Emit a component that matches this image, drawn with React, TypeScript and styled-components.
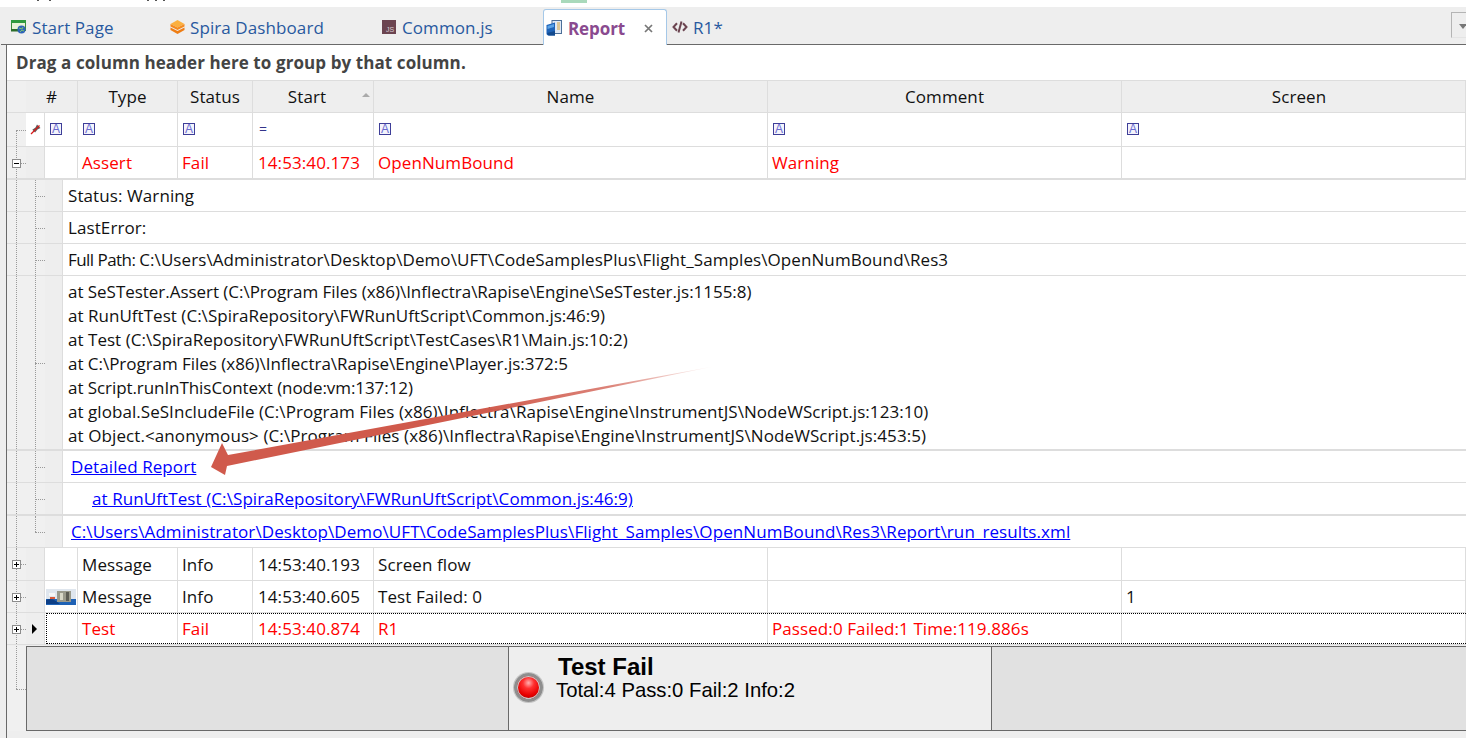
import React from "react";
import styled, { createGlobalStyle } from "styled-components";

const Global = createGlobalStyle`
  html, body { margin: 0; padding: 0; background: #eeeeee; overflow: hidden; }
  * { box-sizing: border-box; }
`;

const COLUMNS = "19px 19px 33px 100px 75px 121px 394px 354px 1fr";
const BODY_FONT = `"Open Sans", "Noto Sans", sans-serif`;

const Page = styled.div`
  position: relative;
  width: 1466px;
  height: 738px;
  display: flex;
  flex-direction: column;
  background: #eeeeee;
  overflow: hidden;
  font-family: ${BODY_FONT};
  font-size: 17px;
  letter-spacing: 0.09px;
  color: #111;
`;

const TopClip = styled.div`
  height: 7px;
  flex: none;
  background: #fff;
  display: flex;
  align-items: flex-start;
  padding-left: 36px;
`;

const Descender = styled.i<{ $gap: number; $w?: number }>`
  display: block;
  width: ${(p) => p.$w ?? 2}px;
  height: ${(p) => (p.$w ? 3 : 1)}px;
  margin-left: ${(p) => p.$gap}px;
  background: ${(p) => (p.$w ? "#a9d9bb" : "#555")};
`;

const TabStrip = styled.div`
  position: relative;
  height: 38px;
  flex: none;
  display: flex;
  align-items: flex-end;
  padding-left: 10px;
  margin-left: 1px;
  border-bottom: 1px solid #696969;
`;

const Tab = styled.div<{ $w: number }>`
  width: ${(p) => p.$w}px;
  height: 34px;
  flex: none;
  display: flex;
  align-items: center;
  gap: 5px;
  color: #28599f;
`;

const ActiveTab = styled.div`
  width: 124px;
  height: 36px;
  flex: none;
  margin-bottom: -1px;
  margin-right: 5px;
  display: flex;
  align-items: center;
  gap: 6px;
  padding: 1px 0 0 2px;
  background: #fff;
  border: 1px solid #a5c8e8;
  border-bottom: none;
  border-radius: 3px 3px 0 0;
  color: #8a4a8f;
  font-weight: 700;
  letter-spacing: -0.1px;
`;

const CloseMark = styled.span`
  margin-left: 13px;
  display: flex;
  color: #777;
`;

const DropButton = styled.div`
  position: absolute;
  right: 0;
  top: 5px;
  width: 15px;
  height: 26px;
  border: 1px solid #b4b4b4;
  border-right: none;
  border-bottom-color: #e4e4e4;
  &::after {
    content: "";
    position: absolute;
    left: 7px;
    top: 11px;
    border: 4px solid transparent;
    border-top: 5px solid #777;
  }
`;

const Workspace = styled.div`
  flex: 1;
  min-height: 0;
  margin-left: 6px;
  border-left: 1px solid #696969;
  display: flex;
  flex-direction: column;
`;

const GroupBar = styled.div`
  height: 35px;
  flex: none;
  background: #fff;
  display: flex;
  align-items: center;
  padding-left: 9px;
  font-weight: 700;
  color: #444;
`;

const Row = styled.div<{ $h: number; $line?: number }>`
  position: relative;
  flex: none;
  height: ${(p) => p.$h}px;
  display: grid;
  grid-template-columns: ${COLUMNS};
  border-bottom: ${(p) => p.$line ?? 1}px solid #dddddd;
  background: #fff;
`;

const DetailRow = styled(Row)`
  grid-template-columns: 19px 19px 18px 1fr;
`;

const SelectedRow = styled(Row)`
  &::after {
    content: "";
    position: absolute;
    left: 39px;
    right: 0;
    top: 0;
    bottom: 0;
    border: 1px dotted #000;
    border-right: none;
    pointer-events: none;
  }
`;

type TreeKind = "none" | "start" | "branch" | "through" | "last";

const Tree = styled.div<{ $kind: TreeKind; $stubAt?: string }>`
  position: relative;
  background: #f0f0f0;
  ${(p) =>
    p.$kind === "none"
      ? ""
      : `
  &::before {
    content: "";
    position: absolute;
    left: 9px;
    border-left: 1px dotted #9a9a9a;
    top: ${p.$kind === "start" ? p.$stubAt ?? "50%" : "0"};
    bottom: ${p.$kind === "last" ? `calc(100% - ${p.$stubAt ?? "50%"})` : "0"};
  }
  ${
    p.$kind === "through"
      ? ""
      : `&::after {
    content: "";
    position: absolute;
    left: 9px;
    right: 0;
    top: ${p.$stubAt ?? "50%"};
    border-top: 1px dotted #9a9a9a;
  }`
  }`}
`;

const Toggle = styled.span<{ $plus?: boolean }>`
  position: absolute;
  z-index: 1;
  left: 5px;
  top: 50%;
  width: 9px;
  height: 9px;
  margin-top: -4px;
  background: #fff;
  border: 1px solid #8c8c8c;
  &::before {
    content: "";
    position: absolute;
    left: 1px;
    right: 1px;
    top: 3px;
    height: 1px;
    background: #000;
  }
  ${(p) =>
    p.$plus
      ? `&::after {
    content: "";
    position: absolute;
    top: 1px;
    bottom: 1px;
    left: 3px;
    width: 1px;
    background: #000;
  }`
      : ""}
`;

const Indicator = styled.div<{ $white?: boolean }>`
  position: relative;
  display: flex;
  align-items: center;
  justify-content: center;
  background: ${(p) => (p.$white ? "#fff" : "#eeeeee")};
  border-right: 1px solid #dddddd;
`;

const Pointer = styled.i`
  display: block;
  margin-left: -2px;
  border-left: 5px solid #000;
  border-top: 5px solid transparent;
  border-bottom: 5px solid transparent;
`;

const HeadRow = styled(Row)`
  border-top: 1px solid #dddddd;
`;

const HeadCell = styled.div<{ $sorted?: boolean; $span?: number; $shift?: number }>`
  position: relative;
  display: flex;
  align-items: center;
  justify-content: center;
  grid-column: span ${(p) => p.$span ?? 1};
  background: #eeeeee;
  border-right: 1px solid #dddddd;
  padding-left: ${(p) => p.$shift ?? 0}px;
  ${(p) =>
    p.$sorted
      ? `padding-right: 12px;
  &::after {
    content: "";
    position: absolute;
    right: 3px;
    top: 12px;
    border: 4px solid transparent;
    border-top: none;
    border-bottom: 4px solid #aaa;
  }`
      : ""}
`;

const Cell = styled.div<{ $red?: boolean; $pad?: number }>`
  display: flex;
  align-items: center;
  padding-left: ${(p) => p.$pad ?? 4}px;
  background: #fff;
  border-right: 1px solid #dddddd;
  white-space: nowrap;
  overflow: hidden;
  color: ${(p) => (p.$red ? "#ff0000" : "#111")};
`;

const FilterCell = styled(Cell)`
  padding-bottom: 2px;
`;

const FilterGlyph = styled.span`
  width: 12px;
  height: 12px;
  display: flex;
  align-items: flex-end;
  justify-content: center;
  border: 1px solid #3e3e98;
  background: #f4f4fc;
  color: #6a6ad0;
  font-family: "Liberation Sans", sans-serif;
  font-size: 12px;
  line-height: 10px;
  letter-spacing: 0;
  overflow: hidden;
`;

const EqualSign = styled.span`
  color: #33338a;
  font-size: 14px;
  padding-left: 1px;
`;

const DetailText = styled.div<{ $pad?: number; $stack?: boolean }>`
  display: flex;
  flex-direction: ${(p) => (p.$stack ? "column" : "row")};
  align-items: ${(p) => (p.$stack ? "flex-start" : "center")};
  padding-left: ${(p) => p.$pad ?? 5}px;
  padding-top: ${(p) => (p.$stack ? 4 : 0)}px;
  white-space: pre;
  overflow: hidden;
`;

const TightLabel = styled.span`
  letter-spacing: -0.55px;
`;

const StackLine = styled.div<{ $track: number }>`
  height: 24px;
  line-height: 24px;
  letter-spacing: ${(p) => p.$track}px;
`;

const LinkText = styled.a`
  color: #0000ff;
  text-decoration: underline;
`;

const FooterRow = styled.div`
  flex: none;
  height: 85px;
  margin-top: 1px;
  display: grid;
  grid-template-columns: 19px 1fr;
`;

const SummaryPanel = styled.div`
  background: #e1e1e1;
  border: 1px solid #696969;
  border-right: none;
  display: grid;
  grid-template-columns: 481px 484px 1fr;
`;

const SummaryCentre = styled.div`
  background: #eeeeee;
  border-left: 1px solid #696969;
  border-right: 1px solid #696969;
  display: flex;
  align-items: flex-start;
  padding: 8px 0 0 5px;
  gap: 13px;
  font-family: "Liberation Sans", Arial, sans-serif;
  color: #000;
  letter-spacing: 0;
`;

const Lamp = styled.div`
  flex: none;
  width: 29px;
  height: 29px;
  margin-top: 18px;
  border-radius: 50%;
  border: 3px solid #8e8e8e;
  box-shadow: 0 0 0 1px #c4c4c4, inset 0 0 0 1px #c8c8c8;
  background: radial-gradient(circle at 50% 30%, #ffb0b0 0%, #ff3030 28%, #e80000 62%, #900000 100%);
`;

const SummaryText = styled.div`
  display: flex;
  flex-direction: column;
`;

const SummaryTitle = styled.div`
  font-size: 24px;
  font-weight: 700;
  line-height: 24px;
  padding-left: 2px;
`;

const SummaryLine = styled.div`
  font-size: 20.3px;
  line-height: 23px;
`;

const ArrowLayer = styled.svg`
  position: absolute;
  left: 0;
  top: 0;
  pointer-events: none;
`;

const StartIcon = () => (
  <svg width="16" height="14" viewBox="0 0 16 14">
    <rect x="0.5" y="0.5" width="14" height="10" fill="#e8f2d8" stroke="#3c8a3c" />
    <rect x="0" y="0" width="15" height="3" fill="#2f9a3f" />
    <rect x="0" y="9" width="12" height="2.5" fill="#2c6e2c" />
    <circle cx="10.5" cy="9.5" r="4" fill="#2f64b8" />
    <path d="M8 8l3 1 1-2M9 12l2-2 2 1" stroke="#7fc66a" fill="none" />
  </svg>
);

const SpiraIcon = () => (
  <svg width="15" height="16" viewBox="0 0 15 16">
    <path d="M7.5 8.5L0.5 5 7.5 1 14.5 5z" fill="#fbb040" />
    <path d="M0.5 5v2.5l7 3.5 7-3.5V5l-7 3.5z" fill="#f58a1f" />
    <path d="M0.5 8.5V11l7 4 7-4V8.5l-7 3.5z" fill="#ee7d14" />
  </svg>
);

const JsIcon = () => (
  <svg width="14" height="14" viewBox="0 0 14 14" style={{ marginRight: 1 }}>
    <rect width="14" height="14" fill="#6b4450" />
    <text x="4" y="12" fontSize="7" fontFamily="Liberation Sans" fill="#d8ccd0">JS</text>
  </svg>
);

const ReportIcon = () => (
  <svg width="16" height="16" viewBox="0 0 16 16">
    <rect x="6" y="0.5" width="9.5" height="13" fill="#dfe9f6" stroke="#4c6f98" />
    <path d="M11 3h3M11 5h3M11 7h3M11 9h3" stroke="#d9a53a" />
    <path d="M0.5 5L9 2.5v13H2.5C1.4 15.5.5 14.6.5 13.5z" fill="#1e63b8" />
    <path d="M1.5 6L8 4v3L1.5 9z" fill="#5ba3e6" />
    <path d="M1 13l8-2v4.5H2.5z" fill="#124a8e" />
  </svg>
);

const CodeIcon = () => (
  <svg width="16" height="12" viewBox="0 0 16 12">
    <path d="M5 2.2L1.5 6 5 9.8M11 2.2L14.5 6 11 9.8" fill="none" stroke="#6b4450" strokeWidth="2" />
    <path d="M9.5 0.5L6.5 11.5" fill="none" stroke="#6b4450" strokeWidth="2" />
  </svg>
);

const CloseIcon = () => (
  <svg width="9" height="9" viewBox="0 0 9 9">
    <path d="M1 1l7 7M8 1L1 8" stroke="currentColor" strokeWidth="1.7" />
  </svg>
);

const PinIcon = () => (
  <svg width="11" height="11" viewBox="0 0 11 11">
    <path d="M7 0.5l3.5 3.5-3 1.4-2.4 3.2-2.8-2.8 3.2-2.4z" fill="#5e5e5e" />
    <path d="M1 10L9.5 1.5" stroke="#d81818" strokeWidth="1.3" />
  </svg>
);

const ThumbIcon = () => (
  <svg width="30" height="16" viewBox="0 0 30 16">
    <rect width="30" height="16" fill="#dfe6ee" />
    <rect y="10" width="30" height="6" fill="#1f62b5" />
    <path d="M0 11c6-3 10 1 14 4H0z" fill="#0d3f86" />
    <rect x="11" y="2" width="14" height="11" fill="#9a9a8c" />
    <rect x="14" y="4" width="3" height="7" fill="#d8d8c8" />
    <rect x="20" y="3" width="3" height="9" fill="#5c5c54" />
    <rect x="3" y="4" width="6" height="3" fill="#f6f6f6" />
    <rect x="4" y="8" width="5" height="2" fill="#d85a3a" />
  </svg>
);

const HEADERS = ["Type", "Status", "Start", "Name", "Comment", "Screen"];

const STACK: { text: string; track: number }[] = [
  { text: "at SeSTester.Assert (C:\\Program Files (x86)\\Inflectra\\Rapise\\Engine\\SeSTester.js:1155:8)", track: -0.035 },
  { text: "at RunUftTest (C:\\SpiraRepository\\FWRunUftScript\\Common.js:46:9)", track: 0.03 },
  { text: "at Test (C:\\SpiraRepository\\FWRunUftScript\\TestCases\\R1\\Main.js:10:2)", track: 0.03 },
  { text: "at C:\\Program Files (x86)\\Inflectra\\Rapise\\Engine\\Player.js:372:5", track: -0.03 },
  { text: "at Script.runInThisContext (node:vm:137:12)", track: -0.07 },
  { text: "at global.SeSIncludeFile (C:\\Program Files (x86)\\Inflectra\\Rapise\\Engine\\InstrumentJS\\NodeWScript.js:123:10)", track: 0.05 },
  { text: "at Object.<anonymous> (C:\\Program Files (x86)\\Inflectra\\Rapise\\Engine\\InstrumentJS\\NodeWScript.js:453:5)", track: 0.09 },
];

const RESULT_PATH =
  "C:\\Users\\Administrator\\Desktop\\Demo\\UFT\\CodeSamplesPlus\\Flight_Samples\\OpenNumBound\\Res3\\Report\\run_results.xml";

const DataCells = ({
  red,
  values,
  thumb,
}: {
  red?: boolean;
  values: string[];
  thumb?: boolean;
}) => (
  <>
    <Cell $pad={1}>{thumb && <ThumbIcon />}</Cell>
    {values.map((v, i) => (
      <Cell key={i} $red={red} $pad={i === 2 ? 5 : 4}>
        {v}
      </Cell>
    ))}
  </>
);

export default function App() {
  return (
    <Page>
      <Global />
      <TopClip>
        <Descender $gap={1} />
        <Descender $gap={10} />
        <Descender $gap={96} />
        <Descender $gap={6} />
        <Descender $gap={6} />
        <Descender $gap={396} $w={26} />
      </TopClip>
      <TabStrip>
        <Tab $w={159}>
          <StartIcon />
          Start Page
        </Tab>
        <Tab $w={212}>
          <SpiraIcon />
          Spira Dashboard
        </Tab>
        <Tab $w={161}>
          <JsIcon />
          Common.js
        </Tab>
        <ActiveTab>
          <ReportIcon />
          Report
          <CloseMark>
            <CloseIcon />
          </CloseMark>
        </ActiveTab>
        <Tab $w={80}>
          <CodeIcon />
          R1*
        </Tab>
        <DropButton />
      </TabStrip>
      <Workspace>
        <GroupBar>Drag a column header here to group by that column.</GroupBar>
        <HeadRow $h={33}>
          <Tree $kind="none" />
          <HeadCell $span={2}>#</HeadCell>
          {HEADERS.map((h) => (
            <HeadCell key={h} $sorted={h === "Start"} $shift={h === "Screen" ? 11 : 0}>
              {h}
            </HeadCell>
          ))}
        </HeadRow>
        <Row $h={34}>
          <Tree $kind="start" />
          <Indicator $white>
            <PinIcon />
          </Indicator>
          {["#", ...HEADERS].map((h) => (
            <FilterCell key={h} $pad={5}>
              {h === "Start" ? <EqualSign>=</EqualSign> : <FilterGlyph>A</FilterGlyph>}
            </FilterCell>
          ))}
        </Row>
        <Row $h={33} $line={2}>
          <Tree $kind="branch">
            <Toggle />
          </Tree>
          <Indicator />
          <DataCells red values={["Assert", "Fail", "14:53:40.173", "OpenNumBound", "Warning", ""]} />
        </Row>
        <DetailRow $h={32}>
          <Tree $kind="through" />
          <Tree $kind="branch" />
          <Indicator />
          <DetailText>Status: Warning</DetailText>
        </DetailRow>
        <DetailRow $h={32}>
          <Tree $kind="through" />
          <Tree $kind="branch" />
          <Indicator />
          <DetailText>LastError:</DetailText>
        </DetailRow>
        <DetailRow $h={32}>
          <Tree $kind="through" />
          <Tree $kind="branch" />
          <Indicator />
          <DetailText>
            <TightLabel>Full Path: </TightLabel>
            C:\Users\Administrator\Desktop\Demo\UFT\CodeSamplesPlus\Flight_Samples\OpenNumBound\Res3
          </DetailText>
        </DetailRow>
        <DetailRow $h={175} $line={2}>
          <Tree $kind="through" />
          <Tree $kind="branch" />
          <Indicator />
          <DetailText $stack>
            {STACK.map((s) => (
              <StackLine key={s.text} $track={s.track}>
                {s.text}
              </StackLine>
            ))}
          </DetailText>
        </DetailRow>
        <DetailRow $h={32}>
          <Tree $kind="through" />
          <Tree $kind="branch" />
          <Indicator />
          <DetailText $pad={8}>
            <LinkText>Detailed Report</LinkText>
          </DetailText>
        </DetailRow>
        <DetailRow $h={33} $line={2}>
          <Tree $kind="through" />
          <Tree $kind="branch" />
          <Indicator />
          <DetailText $pad={29}>
            <LinkText>at RunUftTest (C:\SpiraRepository\FWRunUftScript\Common.js:46:9)</LinkText>
          </DetailText>
        </DetailRow>
        <DetailRow $h={32} $line={1}>
          <Tree $kind="through" />
          <Tree $kind="last" />
          <Indicator />
          <DetailText $pad={8}>
            <LinkText>{RESULT_PATH}</LinkText>
          </DetailText>
        </DetailRow>
        <Row $h={33}>
          <Tree $kind="branch">
            <Toggle $plus />
          </Tree>
          <Indicator />
          <DataCells values={["Message", "Info", "14:53:40.193", "Screen flow", "", ""]} />
        </Row>
        <Row $h={32}>
          <Tree $kind="branch">
            <Toggle $plus />
          </Tree>
          <Indicator />
          <DataCells thumb values={["Message", "Info", "14:53:40.605", "Test Failed: 0", "", "1"]} />
        </Row>
        <SelectedRow $h={32}>
          <Tree $kind="branch">
            <Toggle $plus />
          </Tree>
          <Indicator>
            <Pointer />
          </Indicator>
          <DataCells red values={["Test", "Fail", "14:53:40.874", "R1", "Passed:0 Failed:1 Time:119.886s", ""]} />
        </SelectedRow>
        <FooterRow>
          <Tree $kind="last" $stubAt="43px" />
          <SummaryPanel>
            <div />
            <SummaryCentre>
              <Lamp />
              <SummaryText>
                <SummaryTitle>Test Fail</SummaryTitle>
                <SummaryLine>Total:4 Pass:0 Fail:2 Info:2</SummaryLine>
              </SummaryText>
            </SummaryCentre>
            <div />
          </SummaryPanel>
        </FooterRow>
      </Workspace>
      <ArrowLayer width="1466" height="738" viewBox="0 0 1466 738">
        <defs>
          <linearGradient id="tail" gradientUnits="userSpaceOnUse" x1="716" y1="366" x2="480" y2="412">
            <stop offset="0" stopColor="#d05a4c" stopOpacity="0" />
            <stop offset="0.45" stopColor="#d05a4c" stopOpacity="0.75" />
            <stop offset="1" stopColor="#d05a4c" />
          </linearGradient>
        </defs>
        <path d="M716 366L228 455L222 443L211 467L225 475L227 466Z" fill="url(#tail)" />
      </ArrowLayer>
    </Page>
  );
}
